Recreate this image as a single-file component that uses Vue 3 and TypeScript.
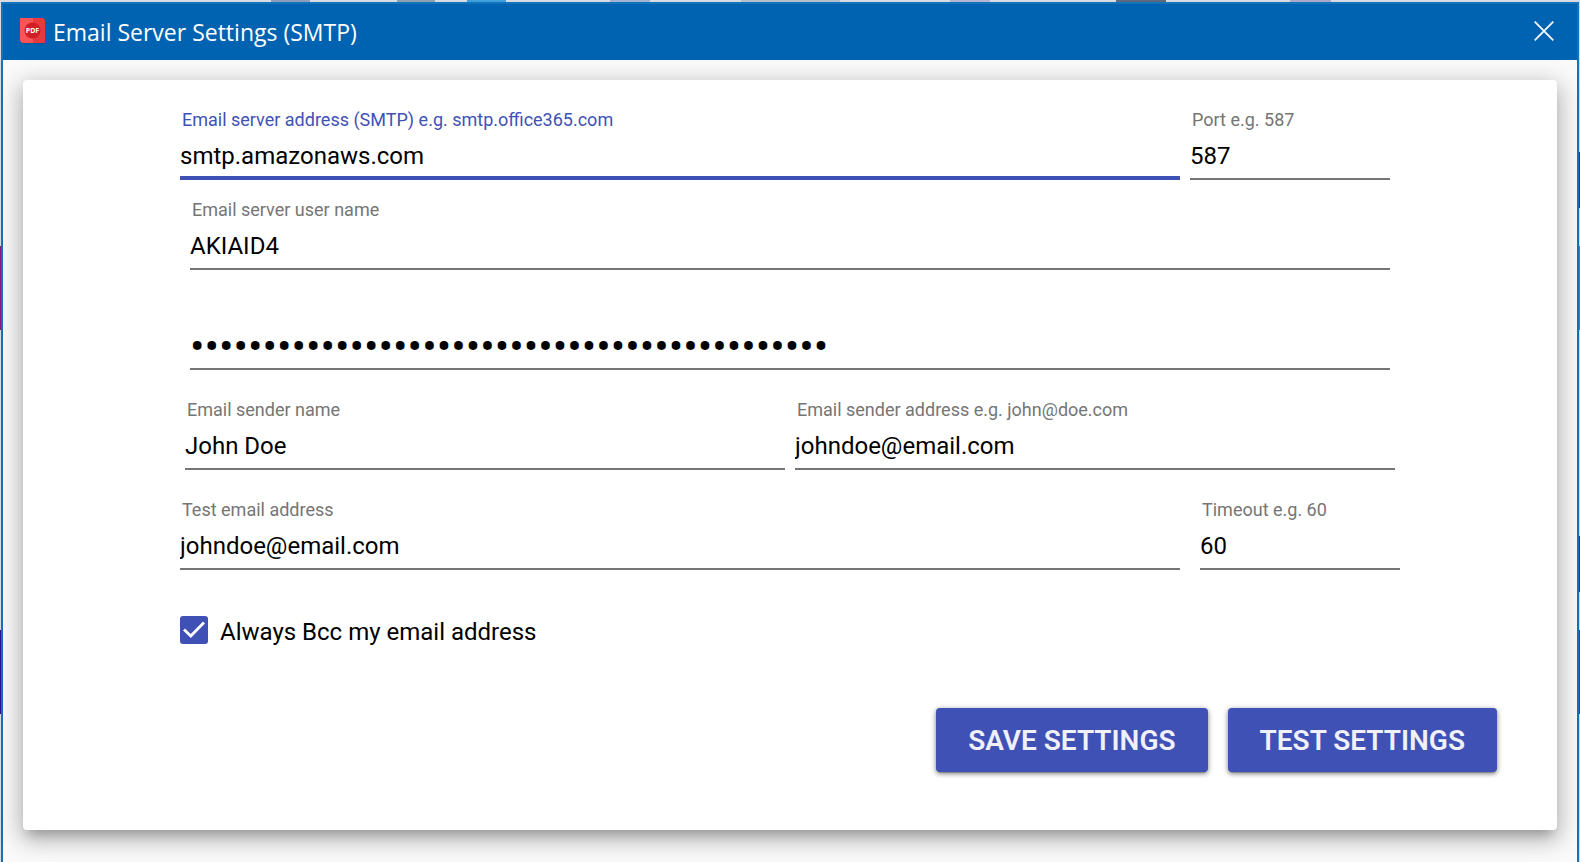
<script setup lang="ts">
import { reactive } from 'vue'

interface Field {
  id: string
  label: string
  type: 'text' | 'password'
  size: 'wide' | 'narrow'
  active?: boolean
}

interface Row {
  name: string
  fields: Field[]
}

const values = reactive<Record<string, string>>({
  server: 'smtp.amazonaws.com',
  port: '587',
  user: 'AKIAID4',
  password: 'x'.repeat(44),
  sender: 'John Doe',
  senderAddress: 'johndoe@email.com',
  testAddress: 'johndoe@email.com',
  timeout: '60',
})

const options = reactive({ alwaysBcc: true })

const rows: Row[] = [
  {
    name: 'server-row',
    fields: [
      { id: 'server', label: 'Email server address (SMTP) e.g. smtp.office365.com', type: 'text', size: 'wide', active: true },
      { id: 'port', label: 'Port e.g. 587', type: 'text', size: 'narrow' },
    ],
  },
  { name: 'user-row', fields: [{ id: 'user', label: 'Email server user name', type: 'text', size: 'wide' }] },
  { name: 'password-row', fields: [{ id: 'password', label: '', type: 'password', size: 'wide' }] },
  {
    name: 'sender-row',
    fields: [
      { id: 'sender', label: 'Email sender name', type: 'text', size: 'wide' },
      { id: 'senderAddress', label: 'Email sender address e.g. john@doe.com', type: 'text', size: 'wide' },
    ],
  },
  {
    name: 'test-row',
    fields: [
      { id: 'testAddress', label: 'Test email address', type: 'text', size: 'wide' },
      { id: 'timeout', label: 'Timeout e.g. 60', type: 'text', size: 'narrow' },
    ],
  },
]
</script>

<template>
  <div class="desktop">
    <section class="window" aria-labelledby="window-title">
      <header class="titlebar">
        <svg class="logo" viewBox="0 0 26 26" aria-hidden="true">
          <path d="M1 1h21q3 0 3 3v22H4q-4 0-4-4V1z" fill="#084f8c" opacity=".5" />
          <path d="M0 0h22q3 0 3 3v22H4q-4 0-4-4z" fill="#e83a3d" />
          <path d="M0 0h13v25H4q-4 0-4-4z" fill="#fb5457" />
          <circle cx="12.5" cy="12.5" r="8" fill="#d01f25" />
          <text x="12.5" y="15" text-anchor="middle" class="logo-text">PDF</text>
        </svg>
        <h1 id="window-title" class="title">Email Server Settings (SMTP)</h1>
        <button class="close" type="button" aria-label="Close">
          <svg viewBox="0 0 20 20" width="20" height="20" aria-hidden="true">
            <path d="M.7.7l18.6 18.6M19.3.7L.7 19.3" stroke="#fff" stroke-width="1.7" fill="none" />
          </svg>
        </button>
      </header>

      <main class="body">
        <form class="card" @submit.prevent>
          <div class="rows">
            <div v-for="row in rows" :key="row.name" class="row" :class="row.name">
              <div v-for="f in row.fields" :key="f.id" class="field" :class="[f.size, { active: f.active }]">
                <label v-if="f.label" class="label" :for="f.id">{{ f.label }}</label>
                <input
                  :id="f.id"
                  v-model="values[f.id]"
                  class="input"
                  :class="{ secret: f.type === 'password' }"
                  :type="f.type"
                  :aria-label="f.label ? undefined : 'Password'"
                  autocomplete="off"
                  spellcheck="false"
                />
              </div>
            </div>
            <label class="check" for="bcc">
              <span class="box">
                <input id="bcc" v-model="options.alwaysBcc" type="checkbox" />
                <svg v-if="options.alwaysBcc" viewBox="0 0 28 28" aria-hidden="true">
                  <path d="M4 13.5l6.8 6.5L24 6.6" stroke="#fff" stroke-width="2.8" fill="none" />
                </svg>
              </span>
              <span class="check-text">Always Bcc my email address</span>
            </label>
          </div>
          <div class="actions">
            <button class="button" type="submit">SAVE SETTINGS</button>
            <button class="button" type="button">TEST SETTINGS</button>
          </div>
        </form>
      </main>
    </section>
  </div>
</template>

<style>
body {
  margin: 0;
}
</style>

<style scoped>
.desktop {
  box-sizing: border-box;
  min-height: 100vh;
  padding: 2px 1px 0;
  display: flex;
  background:
    linear-gradient(#8a1a8c, #8a1a8c) 0 246px / 1px 84px no-repeat,
    linear-gradient(#3a0d8c, #3a0d8c) 0 630px / 1px 84px no-repeat,
    linear-gradient(#1f3d8a, #1f3d8a) 100% 152px / 1px 56px no-repeat,
    linear-gradient(#a8577f, #a8577f) 100% 246px / 1px 84px no-repeat,
    linear-gradient(#1f3d8a, #1f3d8a) 100% 536px / 1px 56px no-repeat,
    linear-gradient(#8a2098, #8a2098) 100% 630px / 1px 84px no-repeat,
    linear-gradient(to right,
      transparent 271px, #8f9dbd 271px 310px, transparent 310px 397px,
      #8fa3b0 397px 435px, transparent 435px 467px, #3f9fdc 467px 506px,
      transparent 506px 610px, #a3b1d3 610px 650px, transparent 650px 741px,
      #b3c0cc 741px 840px, transparent 840px 950px, #b3b5d3 950px 990px,
      transparent 990px 1116px, #5d6a7c 1116px 1166px, transparent 1166px 1290px,
      #aaa9cb 1290px 1331px, transparent 1331px) 0 0 / 100% 2px no-repeat,
    #d7dce2;
  font-family: Roboto, "Liberation Sans", sans-serif;
  color: #000;
}

.window {
  flex: 1;
  display: flex;
  flex-direction: column;
  border: 2px solid #1373ba;
  border-bottom: 0;
  background: #fafafa;
}

.titlebar {
  box-sizing: border-box;
  display: flex;
  align-items: center;
  height: 56px;
  padding: 0 19px 2px 17px;
  background: #0063b1;
}

.logo {
  width: 26px;
  height: 26px;
}

.logo-text {
  font: 700 7px "Open Sans", sans-serif;
  fill: #fff;
}

.title {
  flex: 1;
  margin: 0;
  padding: 2px 0 0 7px;
  font: 400 23px/32px "Open Sans", "Noto Sans", sans-serif;
  color: #fff;
}

.close {
  display: flex;
  padding: 4px;
  border: 0;
  background: none;
  cursor: pointer;
}

.body {
  flex: 1;
  padding: 20px 20px 32px;
  display: flex;
}

.card {
  box-sizing: border-box;
  flex: 1;
  padding: 10px 60px 58px 157px;
  border-radius: 4px;
  background: #fff;
  box-shadow:
    0 10px 10px -6px rgba(0, 0, 0, 0.2),
    0 8px 20px 2px rgba(0, 0, 0, 0.16),
    0 6px 28px 4px rgba(0, 0, 0, 0.14);
}

.rows {
  display: flex;
  flex-direction: column;
  margin-right: 97px;
}

.row {
  display: flex;
  align-items: flex-end;
  height: 100px;
  gap: 10px;
}

.server-row {
  height: 90px;
  padding-right: 10px;
}

.user-row {
  height: 90px;
  padding: 0 10px;
}

.password-row {
  padding: 0 10px;
}

.sender-row {
  padding: 0 5px;
}

.test-row {
  gap: 20px;
}

.field {
  box-sizing: border-box;
  display: flex;
  flex-direction: column;
  height: 72px;
  justify-content: flex-end;
  border-bottom: 2px solid #757575;
}

.wide {
  flex: 1;
}

.narrow {
  width: 200px;
}

.active {
  border-bottom: 4px solid #3f51b5;
}

.label {
  padding-left: 2px;
  font-size: 18px;
  line-height: 20px;
  color: #757575;
}

.active .label {
  color: #3f51b5;
}

.input {
  width: 100%;
  height: 48px;
  padding: 4px 0 0;
  border: 0;
  outline: 0;
  box-sizing: border-box;
  background: none;
  font: 400 24px Roboto, "Liberation Sans", sans-serif;
  color: #000;
}

.active .input {
  height: 46px;
  padding: 6px 0 0;
}

.secret {
  font-size: 43px;
}

.check {
  display: flex;
  align-self: flex-start;
  align-items: center;
  gap: 12px;
  height: 40px;
  margin-top: 40px;
  font-size: 24px;
  cursor: pointer;
}

.check-text {
  padding-top: 4px;
}

.box {
  display: grid;
  width: 28px;
  height: 28px;
}

.box > * {
  grid-area: 1 / 1;
}

.box input {
  appearance: none;
  width: 28px;
  height: 28px;
  margin: 0;
  border: 2px solid #757575;
  border-radius: 3px;
}

.box input:checked {
  border: 0;
  background: #3f51b5;
}

.box svg {
  pointer-events: none;
}

.actions {
  display: flex;
  justify-content: flex-end;
  gap: 20px;
  margin-top: 58px;
}

.button {
  height: 64px;
  padding: 0 32px;
  border: 0;
  border-radius: 4px;
  background: #3f51b5;
  color: #f0f0fa;
  font: 600 28px Roboto, "Liberation Sans", sans-serif;
  box-shadow:
    0 3px 1px -2px rgba(0, 0, 0, 0.2),
    0 2px 4px rgba(0, 0, 0, 0.3),
    0 1px 6px rgba(0, 0, 0, 0.26);
  cursor: pointer;
}
</style>
